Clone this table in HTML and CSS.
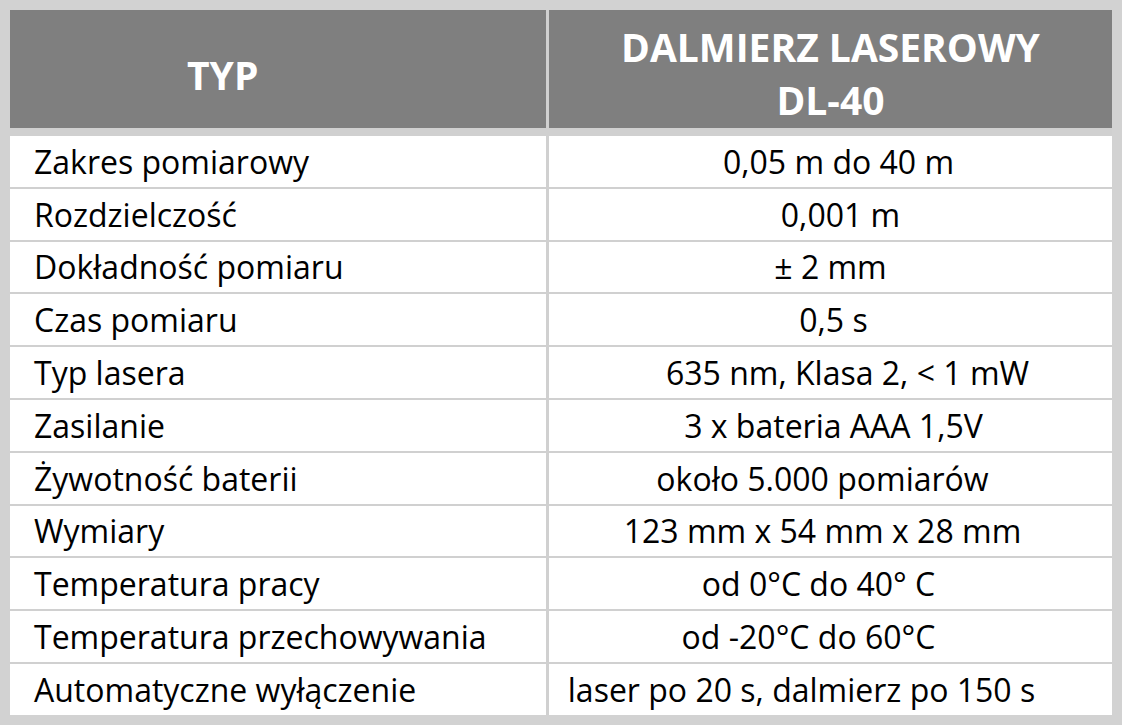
FILE: index.html
```html
<!DOCTYPE html>
<html lang="pl">
<head>
<meta charset="utf-8">
<title>Dalmierz laserowy DL-40</title>
<link rel="stylesheet" href="styles.css">
</head>
<body>
<div class="frame">
  <div class="sheet">
    <div class="head head-typ"><span>TYP</span></div>
    <div class="head head-model"><span>DALMIERZ LASEROWY<br>DL-40</span></div>
    <div class="label">Zakres pomiarowy</div><div class="value nudge-r8">0,05 m do 40 m</div>
    <div class="label">Rozdzielczość</div><div class="value nudge-r10">0,001 m</div>
    <div class="label">Dokładność pomiaru</div><div class="value">± 2 mm</div>
    <div class="label">Czas pomiaru</div><div class="value nudge-r3">0,5 s</div>
    <div class="label">Typ lasera</div><div class="value nudge-r17">635 nm, Klasa 2, &lt; 1 mW</div>
    <div class="label">Zasilanie</div><div class="value nudge-r3">3 x bateria AAA 1,5V</div>
    <div class="label">Żywotność baterii</div><div class="value nudge-l8">około 5.000 pomiarów</div>
    <div class="label">Wymiary</div><div class="value nudge-l8">123 mm x 54 mm x 28 mm</div>
    <div class="label">Temperatura pracy</div><div class="value nudge-l12">od 0°C do 40° C</div>
    <div class="label">Temperatura przechowywania</div><div class="value nudge-l22">od -20°C do 60°C</div>
    <div class="label">Automatyczne wyłączenie</div><div class="value nudge-l29">laser po 20 s, dalmierz po 150 s</div>
  </div>
</div>
</body>
</html>
```
FILE: styles.css
```css
html, body {
  margin: 0;
  padding: 0;
  background: #d2d2d2;
}
body {
  width: 1122px;
  height: 725px;
  overflow: hidden;
  font-family: "Open Sans", "Liberation Sans", sans-serif;
}
.frame {
  padding: 10px;
  background: #d2d2d2;
  height: 725px;
  box-sizing: border-box;
}
.sheet {
  display: grid;
  grid-template-columns: 536px 1fr;
  grid-template-rows: 124px repeat(11, 50.8px);
  column-gap: 3px;
  row-gap: 2px;
  background: #d0d0d0;
}
.head {
  background: #7f7f7f;
  color: #fff;
  font-weight: 700;
  font-size: 39px;
  display: flex;
  align-items: center;
  margin-bottom: 6px;
}
.head-typ {
  padding-left: 177px;
  padding-top: 10px;
}
.head-model {
  justify-content: center;
  text-align: center;
  line-height: 53px;
  padding-top: 8px;
}
.label, .value {
  background: #fff;
  color: #000;
  font-size: 32px;
  display: flex;
  align-items: center;
}
.label {
  padding-left: 24px;
}
.value {
  justify-content: center;
  white-space: nowrap;
}
.nudge-r3 { padding-left: 6px; }
.nudge-r8 { padding-left: 16px; }
.nudge-r10 { padding-left: 20px; }
.nudge-r17 { padding-left: 34px; }
.nudge-l8 { padding-right: 16px; }
.nudge-l12 { padding-right: 24px; }
.nudge-l22 { padding-right: 44px; }
.nudge-l29 { padding-right: 58px; }
```
